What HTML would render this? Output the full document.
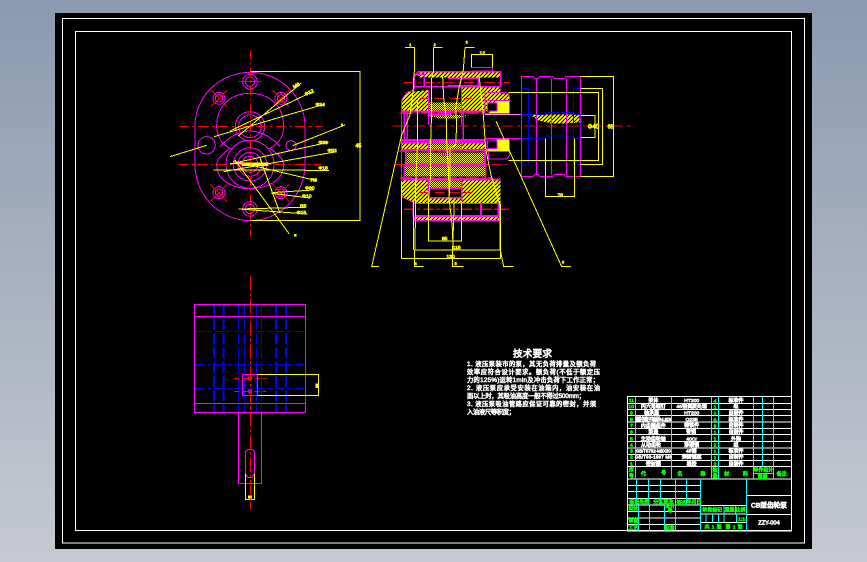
<!DOCTYPE html>
<html><head><meta charset="utf-8"><style>
html,body{margin:0;padding:0;width:867px;height:562px;overflow:hidden;background:linear-gradient(#8a9ab0,#c6c9d2)}
svg{position:absolute;left:0;top:0}
text{font-family:"Liberation Sans","Noto Sans CJK SC",sans-serif}
</style></head><body>
<svg width="867" height="562" viewBox="0 0 867 562" shape-rendering="crispEdges">
<defs>
<pattern id="h" width="12" height="12" patternUnits="userSpaceOnUse"><rect width="12" height="12" fill="#000"/><path d="M-3 9L9-3M3 15L15 3" stroke="#ff0" stroke-width="5"/></pattern>
<pattern id="c" width="6" height="6" patternUnits="userSpaceOnUse"><rect width="6" height="6" fill="#000"/><rect width="3" height="3" fill="#ff0"/><rect x="3" y="3" width="3" height="3" fill="#ff0"/></pattern>
</defs>
<rect x="55" y="13" width="757" height="536" fill="#000"/>
<rect x="62.5" y="18.5" width="742" height="524.5" fill="none" stroke="#fff"/>
<rect x="75.5" y="31.5" width="716" height="499" fill="none" stroke="#fff"/>

<!-- flange view -->
<g transform="translate(170,50) scale(.3333)" fill="none" stroke-width="3">
<g stroke="#ff00ff">
<path d="M75 229A165 162 0 0 1 405 229V343A165 169 0 0 1 75 343Z"/>
<path d="M140 229C140 165 185 130 240 130C295 130 341 165 341 229C341 265 320 285 300 295C325 312 341 330 341 343C341 390 295 416 240 416C185 416 140 390 140 343C140 330 155 312 180 295C160 285 140 265 140 229Z"/>
<path d="M150 290Q190 245 240 243Q290 245 330 290"/>
<circle cx="240" cy="229" r="44"/><circle cx="240" cy="229" r="34"/>
<circle cx="240" cy="343" r="72"/><circle cx="240" cy="343" r="50"/><circle cx="240" cy="343" r="36"/><circle cx="240" cy="343" r="24"/>
<circle cx="110" cy="286" r="26"/><circle cx="363" cy="287" r="15"/>
<circle cx="240" cy="95" r="22"/><circle cx="240" cy="95" r="14"/>
<circle cx="147" cy="145" r="18"/><circle cx="147" cy="145" r="11"/>
<circle cx="333" cy="145" r="18"/><circle cx="333" cy="145" r="11"/>
<circle cx="147" cy="428" r="18"/><circle cx="147" cy="428" r="11"/>
<circle cx="333" cy="428" r="18"/><circle cx="333" cy="428" r="11"/>
<circle cx="240" cy="477" r="22"/><circle cx="240" cy="477" r="14"/>
</g>
<g stroke="#f00">
<path d="M241 0V560" stroke-dasharray="28 10 6 10"/>
<path d="M28 229H456" stroke-dasharray="30 10 8 10"/>
<path d="M25 343H456" stroke-dasharray="30 10 8 10"/>
<path d="M205 95H275M123 120L172 170M172 120L123 170M308 120L358 170M358 120L308 170M121 403L172 455M172 403L121 455M308 403L358 455M358 403L308 455M205 477H275"/>
</g>
<g stroke="#ff0">
<path d="M242 65H570V511H242"/>
<path d="M0 320L110 286M205 258L395 98M180 243L428 125M132 260L465 162M368 287L525 225M180 342L475 277M160 365L500 305M130 360L477 361M190 333L440 392M305 428L430 420M305 430L420 444M205 477L405 472M205 477L412 492M195 330L358 552M270 325L330 490"/>
<path d="M132 360H290M180 340H300"/>
</g>
<rect x="215" y="338" width="80" height="10" fill="#ff0"/>
<g fill="#ff0" stroke="#ff0" stroke-width="2" font-size="15" shape-rendering="auto">
<text x="556" y="292" font-size="16">45</text>
<text x="367" y="112" transform="rotate(-30 377 104)">M6</text>
<text x="403" y="134" transform="rotate(-25 414 128)">Φ12</text>
<text x="436" y="168">Φ24</text>
<text x="445" y="282">Φ36</text><text x="472" y="306">Φ52</text>
<text x="445" y="359">Φ18</text><text x="422" y="395">R8</text><text x="405" y="418">Φ30</text>
<text x="396" y="442">Φ10</text><text x="390" y="473">R5</text><text x="380" y="492">Φ15</text>
</g>
<g fill="#ff0"><rect x="513" y="220" width="6" height="6"/><rect x="372" y="552" width="8" height="8"/></g>
</g>

<!-- section view -->
<g transform="translate(365,35) scale(.3333)" fill="none" stroke-width="3">
<g stroke="none">
<rect x="160" y="110" width="247" height="17" fill="url(#h)"/>
<path d="M110 195L125 172L190 165V228H110Z" fill="url(#h)"/>
<rect x="290" y="155" width="117" height="73" fill="url(#h)"/>
<rect x="190" y="203" width="100" height="30" fill="url(#c)"/>
<path d="M180 240H310L280 250H220Z" fill="url(#c)"/>
<rect x="365" y="175" width="68" height="22" fill="url(#h)"/>
<rect x="110" y="322" width="80" height="20" fill="url(#h)"/>
<rect x="190" y="318" width="100" height="28" fill="url(#c)"/>
<rect x="290" y="322" width="72" height="20" fill="url(#h)"/>
<rect x="122" y="352" width="240" height="34" fill="url(#c)"/>
<rect x="120" y="395" width="242" height="30" fill="url(#c)"/>
<rect x="190" y="433" width="100" height="27" fill="url(#c)"/>
<path d="M110 437H190V505H150L112 485Z" fill="url(#h)"/>
<rect x="290" y="437" width="117" height="68" fill="url(#h)"/>
<rect x="190" y="488" width="100" height="17" fill="url(#h)"/>
<rect x="150" y="543" width="255" height="14" fill="url(#h)"/>
<path d="M495 238H645V262L600 266H560L520 256Z" fill="url(#h)"/>
<path d="M368 236L380 226L395 222V197H433V236Z" fill="#ff0"/>
<path d="M368 350V340H395V312H433V350Z" fill="#ff0"/>
<rect x="368" y="204" width="28" height="24" fill="#000"/><rect x="368" y="318" width="28" height="22" fill="#000"/>
</g>
<g stroke="#f00">
<path d="M82 273H800" stroke-dasharray="32 12 10 12"/>
<path d="M117 142H435" stroke-dasharray="32 10 8 10"/>
<path d="M103 235H360" stroke-dasharray="40 8 10 8" stroke-width="5"/>
<path d="M103 349H360" stroke-dasharray="40 8 10 8" stroke-width="5"/>
<path d="M90 388H435" stroke-dasharray="30 10 8 10"/>
<path d="M103 428H380" stroke-dasharray="40 8 10 8" stroke-width="5"/>
<path d="M117 523H432" stroke-dasharray="30 10 8 10" stroke-width="5"/>
<path d="M165 190H320M165 472H320" stroke-dasharray="30 14"/>
</g>
<g stroke="#ff00ff">
<path d="M148 160V125L160 110H407V155H148M148 118H178V158M247 130H340V152H247M292 110V127M340 127V157" stroke-width="5"/>
<path d="M110 195L125 172L148 165M110 195V485L125 493L150 505H400M190 165V270M290 155V270M360 175L370 172H425L433 183V236H360ZM360 197H433M368 204H396V228H368Z"/>
<path d="M110 230H360" stroke-width="6"/>
<path d="M118 228V320M127 228V320M190 240H255V233H225M295 228V312" stroke-width="5"/>
<path d="M110 315H360M110 322H360M110 345H360" stroke-width="6"/>
<path d="M190 355V345H290M227 348H255V358H227M290 315V350M190 315V345"/>
<path d="M366 312H433V350H366ZM368 318H396V340H368ZM370 350V372H425L433 362V350M360 310H470"/>
<path d="M122 345V390M360 345V390M118 392V432H362V392" stroke-width="5"/>
<path d="M120 388H362M118 392H362M112 433H407" stroke-width="6"/>
<path d="M190 433V505M290 433V505M190 460H290M190 488H290" stroke-width="4"/>
<path d="M145 505V543L150 557H405V505M150 543H400M348 505V543M400 505V543" stroke-width="5"/>
<path d="M320 98H383V108H320M325 97L365 97"/>
<path d="M360 238H470" stroke="#ff80ff"/>
<path d="M470 125H505L510 131H519L524 125H563L568 131H597L602 125H647V424H602L597 418H568L563 424H524L519 418H510L505 424H470ZM515 130V420M560 130V420M604 130V420M647 125V424"/>
</g>
<g stroke="#00f">
<path d="M470 160H490V390H470M490 160V390M625 160H647M625 160V388H647" stroke-dasharray="30 6"/>
<path d="M470 238H540V232H628V238H645V310H625V303H541V310H470M490 310H540" stroke-dasharray="36 6"/>
</g>
<g stroke="#ff0">
<path d="M320 98V58H382V98"/>
<path d="M430 172H700V376H430M647 160H713V388H647M647 125H745V424H647M647 241H690V307H647M541 310V484H628V310"/>
<path d="M120 37H148V110L145 140V160L135 240L110 300L20 695M18 695H42M205 37H233M205 37V110L200 130V230L197 320V420L190 500V618H290V500M300 37H329M300 37L295 105L290 128L282 160L272 220L275 270L272 330L255 340L255 440L252 490L258 540L262 580V612M233 125L236 190L245 260V320L250 400L253 480"/>
<path d="M157 195V340L152 440L152 540L150 605V645H407M145 500V645M109 440V670H407M407 505V670M190 618V505M342 120L355 240L362 340L378 420L405 510L405 640L416 695H446M148 645V695H176M268 490L262 670V695H296M393 258L590 695H618"/>
</g>
<g fill="#ff0" stroke="#ff0" stroke-width="2" font-size="15" text-anchor="middle" shape-rendering="auto">
<text x="352" y="58">12</text><text x="136" y="33" font-size="11">1</text><text x="209" y="33" font-size="11">2</text><text x="305" y="26" font-size="11">3</text>
<text x="685" y="281" font-size="18">Φ40</text><text x="737" y="281" font-size="16">85</text>
<text x="586" y="484">78</text><text x="239" y="615">85</text><text x="275" y="642">115</text><text x="257" y="669">130</text><text x="152" y="690" font-size="11">4</text><text x="272" y="690" font-size="11">5</text><text x="594" y="686" font-size="11">6</text>
</g>
</g>

<!-- lower view -->
<g transform="translate(180,270) scale(.3333)" fill="none" stroke-width="3">
<g stroke="#00f">
<path d="M102 103V428M131 103V428M288 103V428M318 103V428" stroke-width="6" stroke-dasharray="34 9"/>
<path d="M175 103V428M193 103V428M229 103V428M244 103V428" stroke-dasharray="34 9"/>
<path d="M43 184H377M43 283H377M43 355H377" stroke-dasharray="30 8 14 8"/>
</g>
<g stroke="#ff00ff">
<rect x="43" y="103" width="334" height="325"/><path d="M43 139H377M43 400H377"/>
<rect x="187" y="313" width="45" height="64"/><circle cx="210" cy="325" r="5"/><circle cx="210" cy="364" r="5"/>
<path d="M175 428V640H245V428"/>
<path d="M196 545L203 538H217L224 545V610L217 622H203L196 610Z"/>
</g>
<g stroke="#ff0">
<path d="M232 313H416V377H232M416 313V377"/>
<path d="M196 610V688H224V610"/>
</g>
<g stroke="#f00">
<path d="M211 18V720" stroke-dasharray="44 8 8 8"/>
<path d="M162 325H260M162 364H260" stroke-dasharray="16 8 30 8"/>
</g>
<g fill="#ff0"><rect x="407" y="340" width="8" height="14"/><rect x="204" y="676" width="12" height="9"/></g>
</g>

<!-- notes -->
<g fill="#fff" stroke="#fff" stroke-width=".55" font-size="6.3" shape-rendering="auto" lengthAdjust="spacing">
<text x="513" y="357" font-size="9.6" stroke-width=".7" textLength="39">技术要求</text>
<text x="467" y="366" textLength="129">1. 液压泵装市的泵，其无负荷排量及额负荷</text>
<text x="467" y="374" textLength="133">效率应符合设计要求。额负荷(不低于额定压</text>
<text x="467" y="382" textLength="132">力的125%)运转1min及冲击负荷下工作正常；</text>
<text x="467" y="390" textLength="133">2. 液压泵应承受安装在油箱内，油安装在油</text>
<text x="467" y="398" textLength="118">面以上时，其吸油高度一般不得过500mm；</text>
<text x="467" y="406" textLength="129">3. 液压泵吸油管路应保证可靠的密封，并须</text>
<text x="467" y="414" textLength="48">入油液尺等积度；</text>
</g>

<!-- title block -->
<g transform="translate(620,390) scale(.3333)" fill="none" stroke-width="3">
<g stroke="#fff">
<path d="M23 20H515V423H23ZM23 40H515M23 58H515M23 77H515M23 96H515M23 116H515M23 134H515M23 154H515M23 174H515M23 193H515M23 211H515M23 229H515M23 267H515"/>
<path d="M23 286H242M23 305H242M23 325H242M23 345H242M23 364H242M23 384H242M23 404H242M242 346H380M242 372H380M242 397H380M380 316H515M380 373H515"/>
</g>
<g stroke="#0ff">
<path d="M400 250H460"/>
<path d="M46 20V267M154 20V267M274 20V267M295 20V267M400 20V267M428 20V229M460 20V267"/>
<path d="M49 267V345M85 267V345M121 267V345M166 267V423M199 267V345M242 267V423M380 267V423"/>
<path d="M55 345V423M88 345V423M133 345V423M312 346V397M346 346V372M258 372V397M277 372V397M295 372V397M350 372V397"/>
</g>
<g fill="#fff" stroke="#fff" stroke-width="2" font-size="15" text-anchor="middle" shape-rendering="auto">
<text x="100" y="36">泵体</text><text x="100" y="54">内六角螺钉</text><text x="95" y="74">轴承座</text><text x="100" y="93" textLength="108" lengthAdjust="spacing">圆柱滚子轴承NU205</text><text x="100" y="112">内齿圈组件</text><text x="100" y="131">泵盖</text><text x="100" y="151">主动齿轮轴</text><text x="93" y="169">从动齿轮</text><text x="100" y="188" font-size="13" textLength="105" lengthAdjust="spacing">GB/T5782-M8X30</text><text x="100" y="206" font-size="13" textLength="110" lengthAdjust="spacing">GB/T93-1987 M8</text><text x="100" y="226">密封圈</text>
<text x="215" y="36">HT200</text><text x="215" y="54">45钢调质处理</text><text x="215" y="74">HT200</text><text x="215" y="93">Q235</text><text x="215" y="111">铸铁件</text><text x="213" y="131">青铜</text><text x="215" y="151">40Cr</text><text x="215" y="169">渗碳钢</text><text x="214" y="188">45钢</text><text x="215" y="206">弹簧钢丝</text><text x="215" y="226">橡胶</text>
<text x="348" y="36">标准件</text><text x="348" y="54">组</text><text x="348" y="74">自制件</text><text x="348" y="93">标准件</text><text x="348" y="111">自制件</text><text x="348" y="131">自制件</text><text x="348" y="151">外购</text><text x="348" y="169">组</text><text x="348" y="188">标准件</text><text x="348" y="206">自制件</text><text x="348" y="226">自制件</text>
<text x="447" y="352" font-size="20" stroke-width="2.4">CB型齿轮泵</text>
<text x="447" y="403" font-size="17" stroke-width="2">ZZY-004</text>
</g>
<g fill="#0f0" stroke="#0f0" stroke-width="2" font-size="15" text-anchor="middle" shape-rendering="auto">
<text x="34" y="36">11</text><text x="34" y="54">10</text><text x="34" y="74">9</text><text x="34" y="93">8</text><text x="34" y="111">7</text><text x="34" y="131">6</text><text x="34" y="151">5</text><text x="34" y="169">4</text><text x="34" y="188">3</text><text x="34" y="206">2</text><text x="34" y="226">1</text>
<text x="285" y="37">4</text><text x="285" y="55">1</text><text x="285" y="75">1</text><text x="285" y="94">6</text><text x="285" y="112">6</text><text x="285" y="132">1</text><text x="285" y="152">1</text><text x="285" y="170">2</text><text x="285" y="189">1</text><text x="285" y="207">1</text><text x="285" y="227">2</text>
<text x="34" y="244">序</text><text x="34" y="262">号</text><text x="70" y="256">代</text><text x="131" y="254">号</text><text x="180" y="256">名</text><text x="249" y="256">称</text><text x="285" y="246">数</text><text x="285" y="264">量</text><text x="320" y="256">材</text><text x="376" y="256">料</text><text x="430" y="245">单件总计</text><text x="428" y="265">重量</text><text x="485" y="256">备注</text>
<text x="58" y="341">标记处数</text><text x="115" y="341">分区</text><text x="145" y="341">更改</text><text x="185" y="343">签名</text><text x="222" y="341">年月日</text><text x="150" y="353">设计</text><text x="150" y="368">号</text><text x="40" y="360">设计</text><text x="40" y="398">审核</text><text x="40" y="418">工艺</text><text x="148" y="418">批准</text>
<text x="277" y="365">阶段标记</text><text x="329" y="365">重量</text><text x="362" y="365">比例</text><text x="365" y="392">1:1</text><text x="261" y="416">共</text><text x="279" y="416">1</text><text x="297" y="416">张</text><text x="324" y="416">第</text><text x="342" y="416">1</text><text x="360" y="416">张</text>
</g>
</g>
</svg>
</body></html>
